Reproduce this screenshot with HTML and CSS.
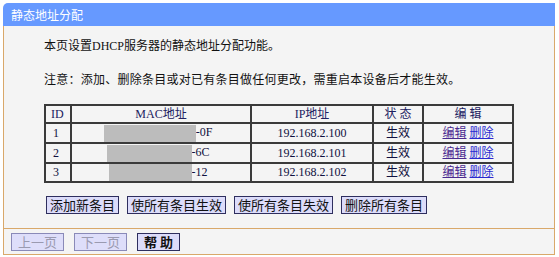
FILE: index.html
```html
<!DOCTYPE html>
<html>
<head>
<meta charset="utf-8">
<link rel="stylesheet" href="styles.css">
</head>
<body>
<div class="panel">
  <div class="title">静态地址分配</div>
  <div class="content">
    <div class="main">
      <p class="line first">本页设置DHCP服务器的静态地址分配功能。</p>
      <p class="line second">注意：添加、删除条目或对已有条目做任何更改，需重启本设备后才能生效。</p>
      <table class="list">
        <colgroup>
          <col class="c-id"><col class="c-mac"><col class="c-ip"><col class="c-st"><col class="c-ed">
        </colgroup>
        <tr class="head"><td>ID</td><td class="mac">MAC地址</td><td>IP地址</td><td>状 态</td><td>编 辑</td></tr>
        <tr><td>1</td><td class="mac"><span class="mask w1"></span>-0F</td><td>192.168.2.100</td><td>生效</td><td><a class="edit" href="#">编辑</a> <a class="del" href="#">删除</a></td></tr>
        <tr><td>2</td><td class="mac"><span class="mask w2"></span>-6C</td><td>192.168.2.101</td><td>生效</td><td><a class="edit" href="#">编辑</a> <a class="del" href="#">删除</a></td></tr>
        <tr><td>3</td><td class="mac"><span class="mask w3"></span>-12</td><td>192.168.2.102</td><td>生效</td><td><a class="edit" href="#">编辑</a> <a class="del" href="#">删除</a></td></tr>
      </table>
      <div class="actions">
        <button class="btn">添加新条目</button>
        <button class="btn">使所有条目生效</button>
        <button class="btn">使所有条目失效</button>
        <button class="btn">删除所有条目</button>
      </div>
    </div>
    <div class="footer">
      <button class="btn nav disabled">上一页</button>
      <button class="btn nav disabled">下一页</button>
      <button class="btn nav help">帮 助</button>
    </div>
  </div>
</div>
</body>
</html>
```

FILE: styles.css
```css
* { box-sizing: border-box; }
body {
  margin: 0;
  background: #ffffff;
  font-family: "Liberation Serif", "Noto Sans CJK SC", serif;
  font-size: 12px;
  color: #000;
}
.panel {
  margin: 3px 0 0 3px;
  width: 552px;
}
.title {
  height: 23px;
  line-height: 23px;
  background: #6699ff;
  color: #fff;
  border-radius: 5px 0 0 0;
  padding-left: 8px;
  font-family: "Noto Sans CJK SC", sans-serif;
  font-size: 12px;
}
.content {
  background: #f4f4f4;
  border: 1px solid #d9a86a;
  border-top: none;
}
.main {
  padding: 11px 0 14px 40px;
}
.line {
  margin: 0;
  height: 18px;
  line-height: 18px;
  font-size: 12px;
  color: #111;
}
.line.second {
  margin-top: 16px;
  letter-spacing: 0.25px;
}
.list {
  margin-top: 15px;
  width: 468px;
  border-collapse: separate;
  border-spacing: 0;
  border: 1px solid #3a3a3a;
  table-layout: fixed;
  color: #101040;
}
.c-id { width: 26px; }
.c-mac { width: 180px; }
.c-ip { width: 122px; }
.c-st { width: 50px; }
.c-ed { width: 90px; }
.list td {
  border: 1px solid #3a3a3a;
  height: 18px;
  padding: 0;
  text-align: center;
  line-height: 16px;
  white-space: nowrap;
}
.list td:first-child { text-align: left; padding-left: 7px; }
.list tr.head td:first-child { padding-left: 5px; }
.list td.mac { padding-right: 6px; }
.list tr.head td.mac { padding-right: 0; }
.list .head td { color: #202060; }
.mask {
  display: inline-block;
  height: 17px;
  vertical-align: middle;
  background: #bcbcbc;
  filter: blur(0.7px);
}
.w1 { width: 92px; }
.w2 { width: 85px; }
.w3 { width: 83px; }
a { text-decoration: underline; }
a.edit { color: #4a2a90; }
a.del { color: #2a2ad0; }
.actions {
  display: flex;
  gap: 8px;
  margin-top: 13px;
  padding-left: 2px;
}
.btn {
  font-family: "Noto Sans CJK SC", sans-serif;
  font-size: 13px;
  height: 18px;
  line-height: 16px;
  padding: 0 3px;
  background: #dcdcfa;
  border: 1px solid #2e2e5e;
  color: #111;
  margin: 0;
}
.footer {
  border-top: 1px solid #d9a86a;
  padding: 4px 0 3px 7px;
  display: flex;
  gap: 10px;
}
.btn.nav { padding: 0 6px; }
.btn.disabled {
  color: #9a9ab0;
  border-color: #8a8ab8;
  background: #dedefa;
}
.btn.help { font-weight: bold; padding: 0 6px; }
```
